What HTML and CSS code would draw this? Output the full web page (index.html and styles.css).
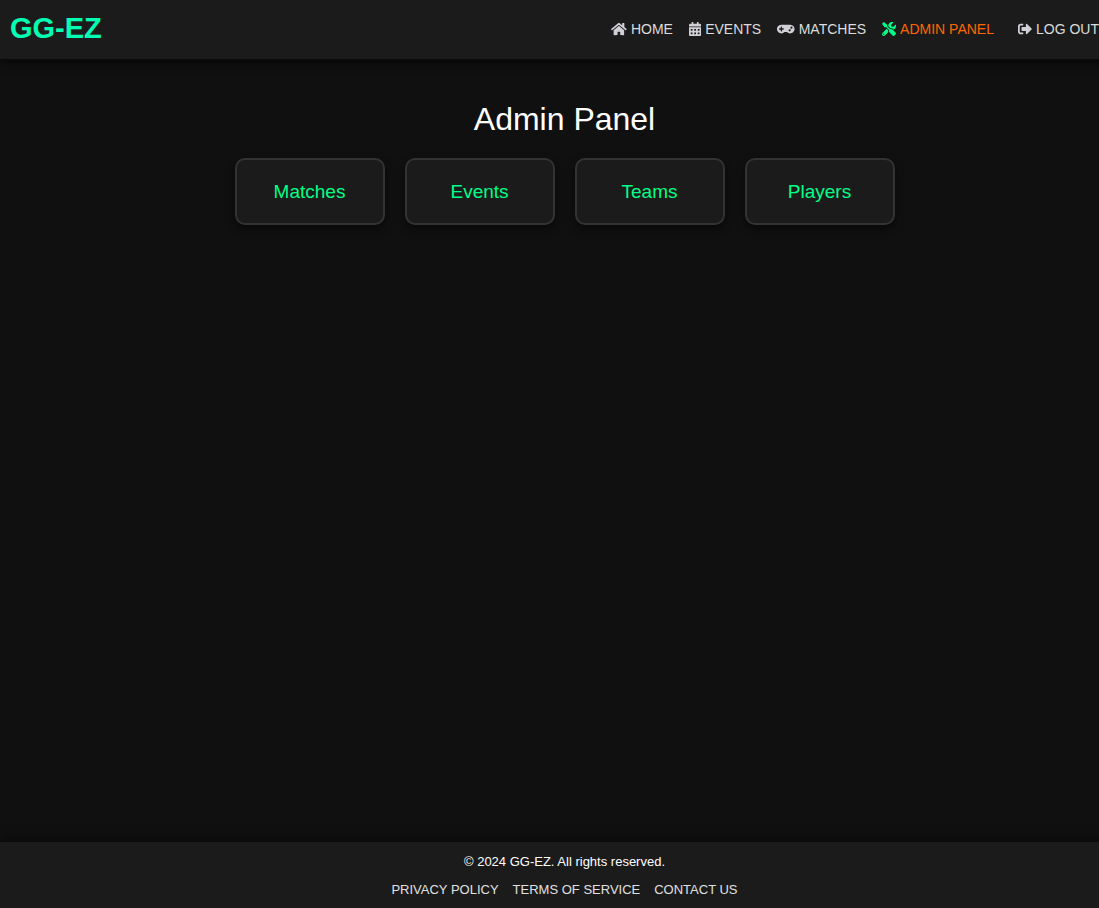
FILE: index.html
```html
<!DOCTYPE html>
<html lang="en">
<head>
<meta charset="utf-8">
<title>GG-EZ Admin Panel</title>
<link rel="stylesheet" href="styles.css">
</head>
<body>
<div class="page">
  <header class="header">
    <a class="logo" href="#">GG-EZ</a>
    <nav class="nav">
      <a class="nav-link" href="#"><svg class="icon" viewBox="0 0 576 512" aria-hidden="true"><path d="M280.37 148.26L96 300.11V464a16 16 0 0 0 16 16l112.06-.29a16 16 0 0 0 15.92-16V368a16 16 0 0 1 16-16h64a16 16 0 0 1 16 16v95.64a16 16 0 0 0 16 16.05L464 480a16 16 0 0 0 16-16V300L295.67 148.26a12.19 12.19 0 0 0-15.3 0zM571.6 251.47L488 182.56V44.05a12 12 0 0 0-12-12h-56a12 12 0 0 0-12 12v72.61L318.47 43a48 48 0 0 0-61 0L4.34 251.47a12 12 0 0 0-1.6 16.9l25.5 31A12 12 0 0 0 45.15 301l235.22-193.74a12.19 12.19 0 0 1 15.3 0L530.9 301a12 12 0 0 0 16.9-1.6l25.5-31a12 12 0 0 0-1.7-16.93z"/></svg>HOME</a>
      <a class="nav-link" href="#"><svg class="icon" viewBox="0 0 448 512" aria-hidden="true"><path d="M0 464c0 26.5 21.5 48 48 48h352c26.5 0 48-21.5 48-48V192H0v272zm320-196c0-6.600 5.400-12 12-12h40c6.600 0 12 5.400 12 12v40c0 6.600-5.400 12-12 12h-40c-6.600 0-12-5.400-12-12v-40zm0 128c0-6.600 5.400-12 12-12h40c6.600 0 12 5.400 12 12v40c0 6.600-5.400 12-12 12h-40c-6.600 0-12-5.400-12-12v-40zM192 268c0-6.600 5.400-12 12-12h40c6.600 0 12 5.400 12 12v40c0 6.600-5.400 12-12 12h-40c-6.600 0-12-5.400-12-12v-40zm0 128c0-6.600 5.400-12 12-12h40c6.600 0 12 5.400 12 12v40c0 6.600-5.400 12-12 12h-40c-6.600 0-12-5.400-12-12v-40zM64 268c0-6.600 5.400-12 12-12h40c6.600 0 12 5.400 12 12v40c0 6.600-5.400 12-12 12H76c-6.600 0-12-5.400-12-12v-40zm0 128c0-6.600 5.400-12 12-12h40c6.600 0 12 5.400 12 12v40c0 6.600-5.400 12-12 12H76c-6.600 0-12-5.400-12-12v-40zM400 64h-48V16c0-8.800-7.200-16-16-16h-32c-8.800 0-16 7.200-16 16v48H160V16c0-8.800-7.200-16-16-16h-32c-8.800 0-16 7.200-16 16v48H48C21.500 64 0 85.500 0 112v48h448v-48c0-26.500-21.500-48-48-48z"/></svg>EVENTS</a>
      <a class="nav-link" href="#"><svg class="icon" viewBox="0 0 640 512" aria-hidden="true"><path d="M480.07 96H160a160 160 0 1 0 114.24 272h91.5A160 160 0 1 0 480.07 96zM248 268a12 12 0 0 1-12 12h-52v52a12 12 0 0 1-12 12h-24a12 12 0 0 1-12-12v-52H84a12 12 0 0 1-12-12v-24a12 12 0 0 1 12-12h52v-52a12 12 0 0 1 12-12h24a12 12 0 0 1 12 12v52h52a12 12 0 0 1 12 12zm216 76a40 40 0 1 1 40-40 40 40 0 0 1-40 40zm64-96a40 40 0 1 1 40-40 40 40 0 0 1-40 40z"/></svg>MATCHES</a>
      <a class="nav-link nav-link-admin" href="#"><svg class="icon" viewBox="0 0 512 512" aria-hidden="true"><path d="M501.1 395.7L384 278.6c-23.1-23.1-57.6-27.6-85.4-13.9L192 158.1V96L64 0 0 64l96 128h62.1l106.6 106.6c-13.6 27.8-9.2 62.3 13.9 85.4l117.1 117.1c14.6 14.6 38.2 14.6 52.7 0l52.7-52.7c14.5-14.6 14.5-38.2 0-52.7zM331.7 225c28.3 0 54.9 11 74.9 31l19.4 19.4c15.8-6.9 30.8-16.5 43.8-29.5 37.1-37.1 49.7-89.3 37.9-136.7-2.200-9-13.5-12.1-20.1-5.500l-74.4 74.4-67.9-11.3L334 98.9l74.4-74.4c6.600-6.600 3.400-17.9-5.700-20.2-47.4-11.7-99.6.9-136.6 37.9-28.5 28.5-41.9 66.1-41.2 103.6l82.1 82.1c8.100-1.900 16.5-2.900 24.7-2.900zm-103.9 82l-56.7-56.7L18.7 402.8c-25 25-25 65.5 0 90.5s65.5 25 90.5 0l123.6-123.6c-7.600-19.9-9.900-41.6-5-62.7zM64 472c-13.2 0-24-10.8-24-24 0-13.3 10.7-24 24-24s24 10.7 24 24c0 13.2-10.7 24-24 24z"/></svg>ADMIN PANEL</a>
      <button class="nav-link logout" type="button"><svg class="icon" viewBox="0 0 512 512" aria-hidden="true"><path d="M497 273L329 441c-15 15-41 4.5-41-17v-96H152c-13.3 0-24-10.7-24-24v-96c0-13.3 10.7-24 24-24h136V88c0-21.4 25.9-32 41-17l168 168c9.3 9.4 9.3 24.6 0 34zM192 436v-40c0-6.6-5.4-12-12-12H96c-17.7 0-32-14.3-32-32V160c0-17.7 14.3-32 32-32h84c6.6 0 12-5.4 12-12V76c0-6.6-5.4-12-12-12H96c-53 0-96 43-96 96v192c0 53 43 96 96 96h84c6.6 0 12-5.4 12-12z"/></svg>LOG OUT</button>
    </nav>
  </header>
  <main class="main">
    <h1 class="title">Admin Panel</h1>
    <div class="cards">
      <a class="card" href="#">Matches</a>
      <a class="card" href="#">Events</a>
      <a class="card" href="#">Teams</a>
      <a class="card" href="#">Players</a>
    </div>
  </main>
  <footer class="footer">
    <p class="copyright">© 2024 GG-EZ. All rights reserved.</p>
    <nav class="footer-links">
      <a class="footer-link" href="#">PRIVACY POLICY</a>
      <a class="footer-link" href="#">TERMS OF SERVICE</a>
      <a class="footer-link" href="#">CONTACT US</a>
    </nav>
  </footer>
</div>
</body>
</html>
```
FILE: styles.css
```css
* {
  box-sizing: border-box;
}

html {
  overflow-x: hidden;
}

body {
  margin: 0;
  overflow-x: hidden;
  background: #101010;
  color: #ffffff;
  font-family: Arial, "Liberation Sans", sans-serif;
}

/* The page runs slightly past the right edge of the window. */
.page {
  display: flex;
  flex-direction: column;
  min-height: 100vh;
  margin-right: -30px;
}

.header {
  display: flex;
  align-items: center;
  justify-content: space-between;
  padding: 10px 30px 12px 10px;
  background: #1b1b1b;
  box-shadow: 0 4px 8px rgba(0, 0, 0, 0.5);
}

.logo {
  color: #00ffb3;
  font-size: 29px;
  font-weight: bold;
  line-height: 37px;
  text-decoration: none;
}

.nav {
  display: flex;
  align-items: center;
  gap: 16px;
}

.nav-link {
  display: flex;
  align-items: center;
  gap: 4px;
  color: #dcdcdc;
  font-family: inherit;
  font-size: 14px;
  line-height: 18px;
  text-decoration: none;
  white-space: nowrap;
}

.icon {
  height: 14px;
  fill: #d0d0d6;
}

.nav-link-admin {
  color: #ff6600;
}

.nav-link-admin .icon {
  fill: #00ff88;
}

.logout {
  padding: 0 0 0 8px;
  border: 0;
  background: none;
  cursor: pointer;
}

.main {
  flex: 1;
  padding: 40px 20px;
}

.title {
  margin: 0 0 18px;
  font-size: 32px;
  font-weight: normal;
  line-height: 41px;
  text-align: center;
}

.cards {
  display: flex;
  flex-wrap: wrap;
  justify-content: center;
  gap: 20px;
}

.card {
  width: 150px;
  padding: 20px;
  border: 2px solid #333333;
  border-radius: 10px;
  background: #1b1b1b;
  box-shadow: 0 4px 8px rgba(0, 0, 0, 0.5);
  color: #00ff88;
  font-size: 19px;
  line-height: 23px;
  text-align: center;
  text-decoration: none;
}

.footer {
  padding: 10px 10px 8px;
  background: #1b1b1b;
  box-shadow: 0 -2px 10px rgba(0, 0, 0, 0.5);
  font-size: 13px;
  line-height: 20px;
  text-align: center;
}

.copyright {
  margin: 0 0 8px;
}

.footer-links {
  display: flex;
  justify-content: center;
  gap: 14px;
}

.footer-link {
  color: #e0e0e0;
  text-decoration: none;
}
```
